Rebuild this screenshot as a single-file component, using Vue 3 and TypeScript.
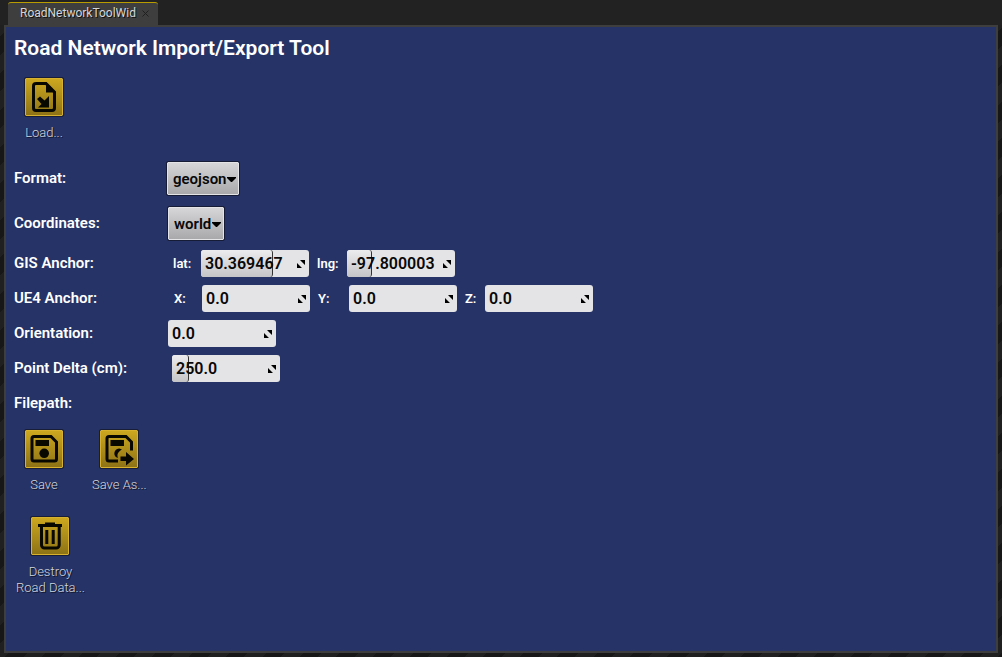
<script setup lang="ts">
import { computed, reactive } from 'vue'

interface Spin {
  id: string
  label: string
  labelClass: string
  value: string
  min?: number
  max?: number
}

interface SpinRow {
  name: string
  rowClass: string
  spins: Spin[]
}

const form = reactive({ format: 'geojson', coordinates: 'world' })

const rows = reactive<SpinRow[]>([
  {
    name: 'GIS Anchor:',
    rowClass: 'row-gis',
    spins: [
      { id: 'lat', label: 'lat:', labelClass: 'axis', value: '30.369467', min: -90, max: 90 },
      { id: 'lng', label: 'lng:', labelClass: 'axis axis-second', value: '-97.800003', min: -180, max: 180 },
    ],
  },
  {
    name: 'UE4 Anchor:',
    rowClass: 'row-ue4',
    spins: [
      { id: 'x', label: 'X:', labelClass: 'axis', value: '0.0' },
      { id: 'y', label: 'Y:', labelClass: 'axis axis-second', value: '0.0' },
      { id: 'z', label: 'Z:', labelClass: 'axis axis-third', value: '0.0' },
    ],
  },
  {
    name: 'Orientation:',
    rowClass: 'row-orientation',
    spins: [{ id: 'orientation', label: '', labelClass: '', value: '0.0' }],
  },
  {
    name: 'Point Delta (cm):',
    rowClass: 'row-delta',
    spins: [{ id: 'delta', label: '', labelClass: '', value: '250.0', min: 10, max: 1500 }],
  },
])

const fills = computed(() => {
  const result: Record<string, string> = {}
  for (const row of rows) {
    for (const s of row.spins) {
      if (s.min === undefined || s.max === undefined) continue
      const share = (Number(s.value) - s.min) / (s.max - s.min)
      result[s.id] = `${Math.min(100, Math.max(0, share * 100))}%`
    }
  }
  return result
})
</script>

<template>
  <div class="window">
    <header class="tabs">
      <div class="tab">
        <span>RoadNetworkToolWid</span>
        <button class="close" type="button" aria-label="Close tab">
          <svg width="7" height="7" viewBox="0 0 7 7"><path d="M0.500 0.500 6.500 6.500M6.500 0.500 0.500 6.500" /></svg>
        </button>
      </div>
    </header>

    <main class="panel">
      <h1>Road Network Import/Export Tool</h1>

      <div class="tools tools-load">
        <button class="tool" type="button">
          <span class="tile">
            <svg width="38" height="38" viewBox="0 0 38 38">
              <path class="line" d="M10.500 5.500H21L29.500 14V30a2.500 2.500 0 0 1-2.500 2.500H11A2.500 2.500 0 0 1 8.500 30V8a2.500 2.500 0 0 1 2.500-2.500Z" />
              <path d="M21 4.500 31 14.500H21ZM12 21 15 18.500 19.500 22.500 24 18V29.500H13L16.500 26Z" />
            </svg>
          </span>
          <span class="caption">Load...</span>
        </button>
      </div>

      <div class="row row-select row-format">
        <label class="name" for="format">Format:</label>
        <span class="picker">
          <select id="format" v-model="form.format"><option>geojson</option></select>
          <svg width="9" height="5" viewBox="0 0 9 5"><path d="M0 0H9V1L5 5H4L0 1Z" /></svg>
        </span>
      </div>
      <div class="row row-select row-coordinates">
        <label class="name" for="coordinates">Coordinates:</label>
        <span class="picker">
          <select id="coordinates" v-model="form.coordinates"><option>world</option></select>
          <svg width="9" height="5" viewBox="0 0 9 5"><path d="M0 0H9V1L5 5H4L0 1Z" /></svg>
        </span>
      </div>

      <div v-for="row in rows" :key="row.name" class="row" :class="row.rowClass">
        <component :is="row.spins.length === 1 ? 'label' : 'span'" class="name" :for="row.spins.length === 1 ? row.spins[0].id : undefined">{{ row.name }}</component>
        <template v-for="s in row.spins" :key="s.id">
          <label v-if="s.label" :class="s.labelClass" :for="s.id">{{ s.label }}</label>
          <span class="spin">
            <span v-if="fills[s.id]" class="fill" :style="{ width: fills[s.id] }"></span>
            <input :id="s.id" v-model="s.value" type="text" inputmode="decimal" />
            <svg width="8" height="8" viewBox="0 0 8 8"><path d="M3 0H8V5ZM0 3V8H5Z" /></svg>
          </span>
        </template>
      </div>

      <div class="row"><span class="name">Filepath:</span></div>

      <div class="tools tools-save">
        <button class="tool" type="button">
          <span class="tile">
            <svg width="38" height="38" viewBox="0 0 38 38">
              <path class="line" d="M9 6.500H26L31.500 12V29a2 2 0 0 1-2 2H9a2 2 0 0 1-2-2V8.500a2 2 0 0 1 2-2Z" />
              <path d="M10.500 10H24V16H10.500Z" />
              <circle cx="19.200" cy="23.300" r="4.800" />
            </svg>
          </span>
          <span class="caption">Save</span>
        </button>
        <button class="tool" type="button">
          <span class="tile">
            <svg width="38" height="38" viewBox="0 0 38 38">
              <path class="line" d="M18 31H9a2 2 0 0 1-2-2V8.500a2 2 0 0 1 2-2H26L31.500 12V20.500" />
              <path d="M10.500 10H24V16H10.500ZM22 19.500C17 22.500 17 25 18 28 13 27 13 19 19.200 18.500ZM20.500 26.500H26V22L34 29 26 35.500V31H20.500Z" />
            </svg>
          </span>
          <span class="caption">Save As...</span>
        </button>
      </div>

      <div class="tools tools-destroy">
        <button class="tool" type="button">
          <span class="tile">
            <svg width="38" height="38" viewBox="0 0 38 38">
              <path d="M7 7H14V5.500H24V7H31V10H7Z" />
              <path class="line" d="M10.500 9.500V28a3 3 0 0 0 3 3H25.200a3 3 0 0 0 3-3V9.500" />
              <path d="M14.300 13H17.300V27H14.300ZM20.700 13H23.700V27H20.700Z" />
            </svg>
          </span>
          <span class="caption">Destroy<br />Road Data...</span>
        </button>
      </div>
    </main>
  </div>
</template>

<style>
html,
body,
#app {
  height: 100%;
}
body {
  margin: 0;
}
</style>

<style scoped>
.window {
  box-sizing: border-box;
  min-height: 100%;
  display: flex;
  flex-direction: column;
  padding: 0 4px 4px;
  font-family: Roboto, "Liberation Sans", sans-serif;
  background: repeating-linear-gradient(135deg, #171717 0 13px, #202020 13px 26px);
}
button,
input,
select {
  font: inherit;
  margin: 0;
}
.tabs {
  display: flex;
  height: 25px;
  margin: 0 -4px;
  padding: 2px 8px 0;
  box-sizing: border-box;
  background: #222;
}
.tab {
  display: flex;
  align-items: center;
  box-sizing: border-box;
  width: 150px;
  padding: 0 9px 2px 12px;
  justify-content: space-between;
  border-top: 1px solid #b89c00;
  border-radius: 3px 3px 0 0;
  background: #3e3e3e;
  color: #d6d6d6;
  font-size: 12px;
  line-height: 20px;
  text-shadow: 1px 1px 0 #111;
}
.close {
  display: flex;
  padding: 0;
  border: 0;
  background: none;
}
.close svg {
  stroke: #202020;
  fill: none;
}
.panel {
  flex: 1;
  display: flex;
  flex-direction: column;
  border: 2px solid #3e3e3e;
  padding: 0 8px;
  background: #263366;
  color: #fff;
}
h1 {
  margin: 0;
  padding-top: 7px;
  font-size: 21px;
  line-height: 28px;
  font-weight: 600;
}
.tools {
  display: flex;
  box-sizing: border-box;
}
.tools-load {
  height: 94px;
  padding: 16px 0 0 11px;
}
.tools-save {
  height: 87px;
  padding: 9px 0 0 11px;
  gap: 29px;
}
.tools-destroy {
  padding: 9px 0 16px 2px;
}
.tool {
  display: flex;
  flex-direction: column;
  align-items: center;
  gap: 9px;
  min-width: 38px;
  height: max-content;
  padding: 0;
  border: 0;
  background: none;
  color: #d3d5dd;
  text-align: center;
}
.tile {
  display: block;
  width: 36px;
  height: 36px;
  border: 1px solid #d8b22e;
  outline: 1px solid #181d38;
  border-radius: 1px;
  background: linear-gradient(#cca71f, #8e7316);
}
.tile svg {
  display: block;
  margin: -1px;
  fill: #080700;
}
.tile svg .line {
  fill: none;
  stroke: #080700;
  stroke-width: 3;
}
.caption {
  font-size: 13px;
  line-height: 16px;
  font-weight: 300;
  white-space: nowrap;
  text-shadow: 1px 1px 0 #10162e;
}
.row {
  display: flex;
  align-items: center;
  height: 35px;
  font-size: 15px;
  line-height: 20px;
  font-weight: 700;
}
.row-select {
  height: 45px;
}
.name {
  flex: none;
  width: 154px;
  padding-bottom: 2px;
  font-weight: 600;
}
.row-format .name {
  width: 153px;
}
.row-gis .name {
  width: 159px;
}
.row-ue4 .name {
  width: 160px;
}
.row-delta .name {
  width: 158px;
}
.picker {
  position: relative;
  display: flex;
}
.picker select {
  appearance: none;
  box-sizing: border-box;
  height: 33px;
  padding: 0 11px 0 5px;
  border: 1px solid #e4e4e6;
  outline: 1px solid #171c36;
  border-radius: 1px;
  background: linear-gradient(#d6d6d8, #a9a9ab);
  color: #080808;
  font-weight: 600;
}
.picker svg {
  position: absolute;
  right: 3px;
  top: 15px;
  pointer-events: none;
}
.axis {
  width: 28px;
  font-size: 13px;
  font-weight: 600;
}
.axis-second {
  width: 30px;
  margin-left: 8px;
}
.row-ue4 .axis-second {
  width: 31px;
}
.axis-third {
  width: 20px;
  margin-left: 8px;
}
.spin {
  position: relative;
  display: flex;
  width: 108px;
  height: 27px;
  border-radius: 3px;
  overflow: hidden;
  background: #e4e4e6;
}
.fill {
  position: absolute;
  inset: 0 auto 0 0;
  box-sizing: border-box;
  border-right: 1px solid #333;
  border-radius: 0 3px 3px 0;
  background: linear-gradient(#ececee, #c5c5c8);
}
.spin input {
  position: relative;
  box-sizing: border-box;
  width: 100%;
  padding: 0 14px 0 4px;
  border: 0;
  background: transparent;
  color: #080808;
  font-size: 16px;
  font-weight: 600;
}
.spin svg {
  position: absolute;
  right: 4px;
  top: 10px;
  pointer-events: none;
}
</style>
